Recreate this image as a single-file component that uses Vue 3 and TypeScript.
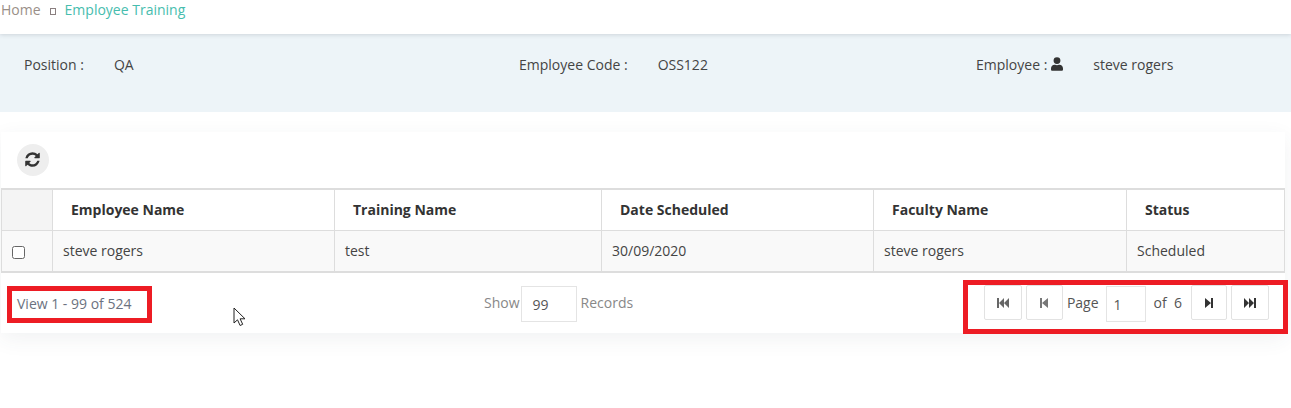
<script setup lang="ts">
const columns = [
  { label: 'Employee Name', value: 'steve rogers' },
  { label: 'Training Name', value: 'test' },
  { label: 'Date Scheduled', value: '30/09/2020' },
  { label: 'Faculty Name', value: 'steve rogers' },
  { label: 'Status', value: 'Scheduled' },
]
</script>

<template>
  <div class="page">
    <nav class="crumbs">
      <span class="home">Home</span>
      <span class="tofu"></span>
      <span class="current">Employee Training</span>
    </nav>

    <section class="info">
      <div class="pair p1"><span>Position :</span><span class="val v1">QA</span></div>
      <div class="pair p2"><span>Employee Code :</span><span class="val v2">OSS122</span></div>
      <div class="pair p3">
        <span>Employee :</span>
        <svg class="user" viewBox="0 0 448 512" width="12" height="14"><path fill="#333" d="M224 256a128 128 0 1 0 0-256 128 128 0 0 0 0 256zm90 32h-17a174 174 0 0 1-146 0h-17C60 288 0 348 0 422v42c0 26 22 48 48 48h352c26 0 48-22 48-48v-42c0-74-60-134-134-134z"/></svg>
        <span class="val v3">steve rogers</span>
      </div>
    </section>

    <section class="card">
      <div class="toolbar">
        <button class="refresh" aria-label="Refresh">
          <svg class="spin" viewBox="0 0 1536 1792" width="15" height="17"><path fill="#333" d="M1511 1056q0 5-1 7-64 268-268 434.500t-478 166.500q-146 0-282.500-55t-243.500-157l-129 129q-19 19-45 19t-45-19-19-45v-448q0-26 19-45t45-19h448q26 0 45 19t19 45-19 45l-137 137q71 66 161 102t187 36q134 0 250-65t186-179q11-17 53-117 8-23 30-23h192q13 0 22.500 9.500t9.500 22.500zm25-800v448q0 26-19 45t-45 19h-448q-26 0-45-19t-19-45 19-45l138-138q-148-137-349-137-134 0-250 65t-186 179q-11 17-53 117-8 23-30 23h-199q-13 0-22.500-9.500t-9.500-22.500v-7q65-268 270-434.500t480-166.500q146 0 284 55.500t245 156.500l130-129q19-19 45-19t45 19 19 45z"/></svg>
        </button>
      </div>

      <div class="grid">
        <div class="cell head check"></div>
        <div v-for="c in columns" :key="c.label" class="cell head">{{ c.label }}</div>
        <div class="cell body check"><span class="box"></span></div>
        <div v-for="c in columns" :key="c.value + c.label" class="cell body">{{ c.value }}</div>
      </div>

      <footer class="pager">
        <div class="view">View 1 - 99 of 524</div>
        <div class="show">
          <span class="txt">Show</span>
          <span class="field wide">99</span>
          <span class="txt">Records</span>
        </div>
        <div class="nav">
          <button class="pg first" aria-label="First">
            <svg viewBox="0 0 12 10" width="12" height="10"><path fill="#666" d="M0 0h2v10H0zM7 0v10L2 5zM12 0v10L7 5z"/></svg>
          </button>
          <button class="pg prev" aria-label="Previous">
            <svg viewBox="0 0 8 10" width="8" height="10"><path fill="#777" d="M0 0h2v10H0zM8 0v10L2 5z"/></svg>
          </button>
          <span class="lbl">Page</span>
          <span class="field narrow">1</span>
          <span class="lbl of">of&nbsp; 6</span>
          <button class="pg next" aria-label="Next">
            <svg viewBox="0 0 8 10" width="8" height="10"><path fill="#333" d="M0 0v10l6-5zM6 0h2v10H6z"/></svg>
          </button>
          <button class="pg last" aria-label="Last">
            <svg viewBox="0 0 12 10" width="12" height="10"><path fill="#333" d="M0 0v10l5-5zM5 0v10l5-5zM10 0h2v10h-2z"/></svg>
          </button>
        </div>
      </footer>
    </section>

    <div class="mark m1"></div>
    <div class="mark m2"></div>
    <svg class="cursor" viewBox="0 0 14 20" width="14" height="20"><path fill="#fff" stroke="#222" stroke-width="1" d="M1 1v15l3.500-3.200 2.600 5.700 2.600-1.200-2.600-5.500H12z"/></svg>
  </div>
</template>

<style>
html, body { margin: 0; background: #fff; }
</style>

<style scoped>
.page {
  position: relative;
  width: 1291px;
  height: 408px;
  overflow: hidden;
  background: #fff;
  font-family: "Open Sans", "Noto Sans", sans-serif;
  font-size: 14px;
  color: #444;
}
.crumbs {
  height: 34px;
  box-sizing: border-box;
  display: flex;
  align-items: flex-start;
  padding: 0 0 0 1px;
  line-height: 20px;
  font-size: 14px;
  position: relative;
  z-index: 1;
  box-shadow: 0 1px 4px rgba(60, 70, 90, .18);
  background: #fff;
}
.home { color: #9a8f88; }
.tofu {
  width: 4px;
  height: 5px;
  border: 1px solid #8a7f80;
  margin: 8px 9px 0 9px;
}
.current { color: #47bdae; }
.info {
  height: 78px;
  background: #edf4f8;
  display: grid;
  grid-template-columns: 495px 457px 1fr;
  padding: 21px 0 0 24px;
  box-sizing: border-box;
  line-height: 20px;
  color: #444;
}
.pair { display: flex; align-items: flex-start; }
.val { display: inline-block; }
.v1 { margin-left: 30px; }
.v2 { margin-left: 30px; }
.v3 { margin-left: 30px; }
.user { margin: 2px 0 0 4px; }
.card {
  width: 1284px;
  margin: 20px 0 0 1px;
  height: 201px;
  background: #fff;
  box-shadow: 0 6px 20px rgba(60, 70, 90, .07);
  display: flex;
  flex-direction: column;
}
.toolbar {
  height: 56px;
  box-sizing: border-box;
  padding: 12px 0 0 16px;
}
.refresh {
  width: 32px;
  height: 32px;
  padding: 0;
  border: 0;
  border-radius: 50%;
  background: #eee;
  display: flex;
  align-items: center;
  justify-content: center;
}
.spin { margin: -2px 1px 0 0; }
.grid {
  display: grid;
  grid-template-columns: 51px 282px 267px 272px 253px 1fr;
  grid-template-rows: 41px 40px;
  border-top: 2px solid #ddd;
  border-bottom: 2px solid #ddd;
  border-left: 1px solid #ddd;
  border-right: 1px solid #ddd;
}
.cell {
  box-sizing: border-box;
  border-right: 1px solid #ddd;
  display: flex;
  align-items: center;
  padding-left: 10px;
  line-height: 20px;
}
.cell:nth-child(6n) { border-right: 0; }
.head {
  border-bottom: 1px solid #ddd;
  padding-left: 18px;
  font-weight: 700;
  color: #333;
  background: #fff;
}
.head.check { background: #f4f4f4; }
.body { background: #f9f9f9; color: #444; }
.check { padding-left: 10px; }
.box {
  width: 13px;
  height: 13px;
  border: 1px solid #666;
  border-radius: 2.500px;
  background: #fff;
  margin-top: 2px;
  box-sizing: border-box;
}
.pager {
  flex: 1;
  display: grid;
  grid-template-columns: 467px 1fr auto;
  align-items: center;
  padding: 0 16px 0 16px;
  color: #666;
}
.view { color: #6b7280; }
.show { display: flex; align-items: center; gap: 3px; color: #888; }
.txt { margin-bottom: 2px; }
.show .wide { margin: 2px 1px 0 -2px; }
.field {
  box-sizing: border-box;
  height: 36px;
  border: 1px solid #e4e4e4;
  display: flex;
  align-items: center;
  background: #fff;
  color: #555;
}
.wide { width: 56px; padding-left: 11px; }
.narrow { width: 40px; padding-left: 7px; margin: 2px 8px 0 7px; }
.nav { display: flex; align-items: center; }
.lbl { color: #555; margin-bottom: 2px; }
.pg {
  box-sizing: border-box;
  height: 35px;
  padding: 0;
  background: #fff;
  border: 1px solid #e2e2e2;
  border-radius: 2px;
  display: flex;
  align-items: center;
  justify-content: center;
  align-self: flex-start;
  margin-top: 1px;
}
.first { width: 38px; margin-right: 4px; }
.prev { width: 37px; margin-right: 4px; }
.next { width: 36px; margin-left: 9px; margin-right: 4px; }
.last { width: 38px; }
.mark {
  position: absolute;
  box-sizing: border-box;
  border: 5px solid #ed1c24;
}
.m1 { left: 7px; top: 286px; width: 145px; height: 37px; }
.m2 { left: 963px; top: 280px; width: 325px; height: 54px; }
.cursor { position: absolute; left: 233px; top: 307px; }
</style>
